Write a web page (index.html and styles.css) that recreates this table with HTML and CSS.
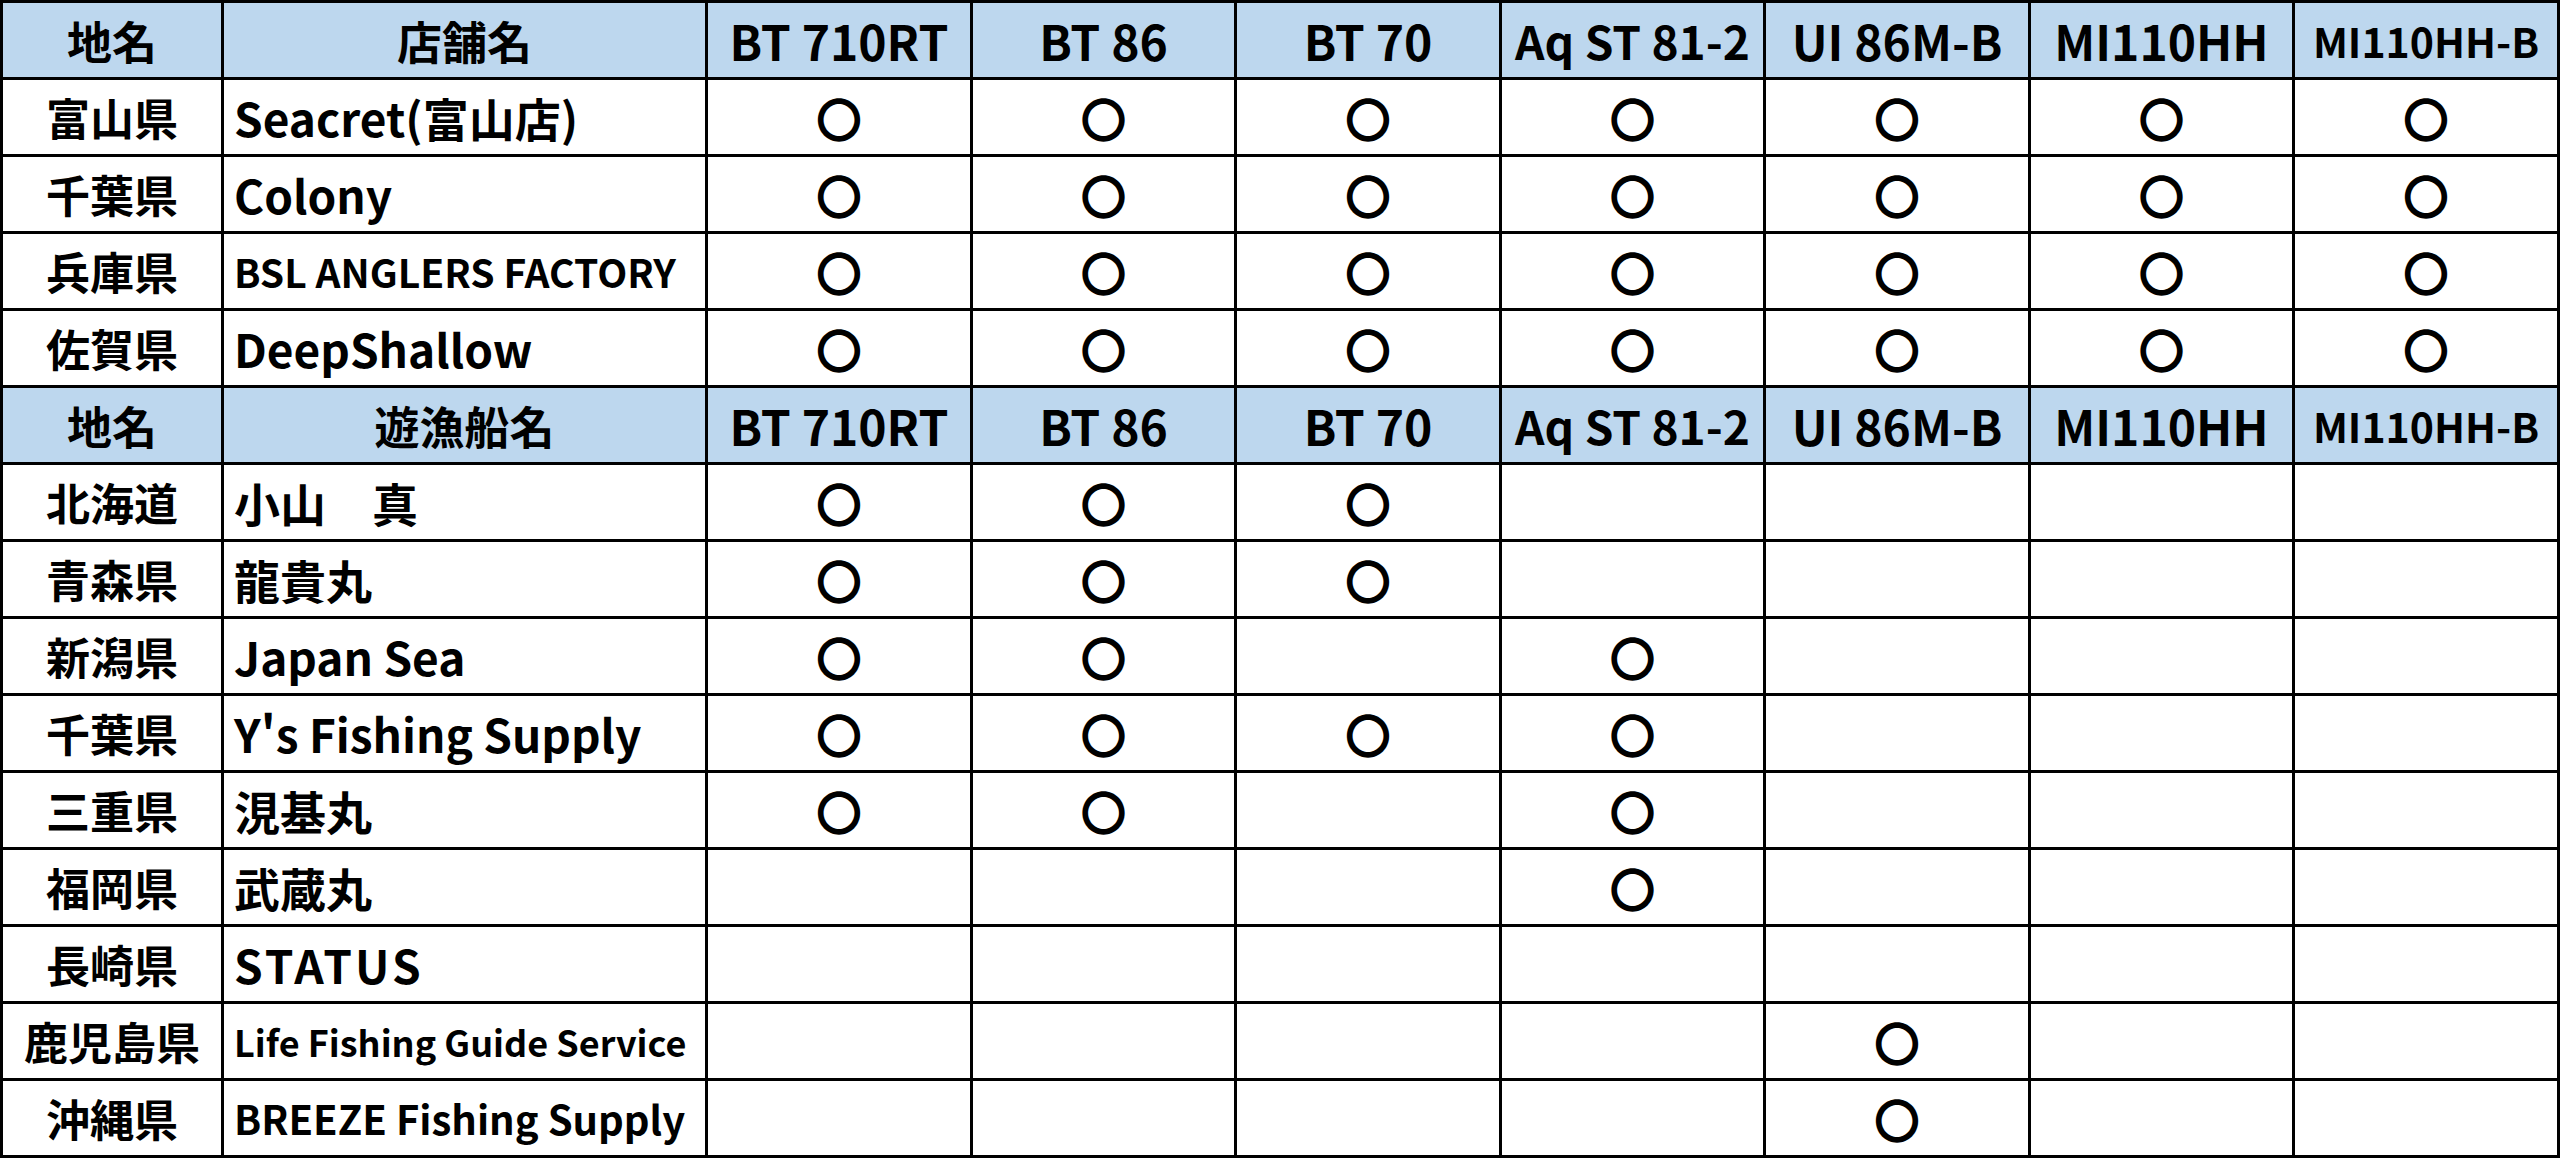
FILE: index.html
```html
<!DOCTYPE html>
<html lang="ja">
<head>
<meta charset="utf-8">
<title>取扱店一覧</title>
<link rel="stylesheet" href="styles.css">
</head>
<body>
<div class="sheet">
  <div class="c hd">地名</div><div class="c hd">店舗名</div>
  <div class="c hd lat">BT 710RT</div><div class="c hd lat">BT 86</div><div class="c hd lat">BT 70</div><div class="c hd lat aq">Aq ST 81-2</div><div class="c hd lat">UI 86M-B</div><div class="c hd lat">MI110HH</div><div class="c hd lat sm">MI110HH-B</div>

  <div class="c pref">富山県</div><div class="c name">Seacret(富山店)</div>
  <div class="c m">〇</div><div class="c m">〇</div><div class="c m">〇</div><div class="c m">〇</div><div class="c m">〇</div><div class="c m">〇</div><div class="c m">〇</div>

  <div class="c pref">千葉県</div><div class="c name">Colony</div>
  <div class="c m">〇</div><div class="c m">〇</div><div class="c m">〇</div><div class="c m">〇</div><div class="c m">〇</div><div class="c m">〇</div><div class="c m">〇</div>

  <div class="c pref">兵庫県</div><div class="c name bsl">BSL ANGLERS FACTORY</div>
  <div class="c m">〇</div><div class="c m">〇</div><div class="c m">〇</div><div class="c m">〇</div><div class="c m">〇</div><div class="c m">〇</div><div class="c m">〇</div>

  <div class="c pref">佐賀県</div><div class="c name">DeepShallow</div>
  <div class="c m">〇</div><div class="c m">〇</div><div class="c m">〇</div><div class="c m">〇</div><div class="c m">〇</div><div class="c m">〇</div><div class="c m">〇</div>

  <div class="c hd">地名</div><div class="c hd">遊漁船名</div>
  <div class="c hd lat">BT 710RT</div><div class="c hd lat">BT 86</div><div class="c hd lat">BT 70</div><div class="c hd lat aq">Aq ST 81-2</div><div class="c hd lat">UI 86M-B</div><div class="c hd lat">MI110HH</div><div class="c hd lat sm">MI110HH-B</div>

  <div class="c pref">北海道</div><div class="c name">小山　真</div>
  <div class="c m">〇</div><div class="c m">〇</div><div class="c m">〇</div><div class="c m"></div><div class="c m"></div><div class="c m"></div><div class="c m"></div>

  <div class="c pref">青森県</div><div class="c name">龍貴丸</div>
  <div class="c m">〇</div><div class="c m">〇</div><div class="c m">〇</div><div class="c m"></div><div class="c m"></div><div class="c m"></div><div class="c m"></div>

  <div class="c pref">新潟県</div><div class="c name">Japan Sea</div>
  <div class="c m">〇</div><div class="c m">〇</div><div class="c m"></div><div class="c m">〇</div><div class="c m"></div><div class="c m"></div><div class="c m"></div>

  <div class="c pref">千葉県</div><div class="c name">Y's Fishing Supply</div>
  <div class="c m">〇</div><div class="c m">〇</div><div class="c m">〇</div><div class="c m">〇</div><div class="c m"></div><div class="c m"></div><div class="c m"></div>

  <div class="c pref">三重県</div><div class="c name">涀基丸</div>
  <div class="c m">〇</div><div class="c m">〇</div><div class="c m"></div><div class="c m">〇</div><div class="c m"></div><div class="c m"></div><div class="c m"></div>

  <div class="c pref">福岡県</div><div class="c name">武蔵丸</div>
  <div class="c m"></div><div class="c m"></div><div class="c m"></div><div class="c m">〇</div><div class="c m"></div><div class="c m"></div><div class="c m"></div>

  <div class="c pref">長崎県</div><div class="c name status">STATUS</div>
  <div class="c m"></div><div class="c m"></div><div class="c m"></div><div class="c m"></div><div class="c m"></div><div class="c m"></div><div class="c m"></div>

  <div class="c pref">鹿児島県</div><div class="c name life">Life Fishing Guide Service</div>
  <div class="c m"></div><div class="c m"></div><div class="c m"></div><div class="c m"></div><div class="c m">〇</div><div class="c m"></div><div class="c m"></div>

  <div class="c pref">沖縄県</div><div class="c name breeze">BREEZE Fishing Supply</div>
  <div class="c m"></div><div class="c m"></div><div class="c m"></div><div class="c m"></div><div class="c m">〇</div><div class="c m"></div><div class="c m"></div>
</div>
</body>
</html>
```

FILE: styles.css
```css
html, body {
  margin: 0;
  padding: 0;
  background: #ffffff;
}

.sheet {
  display: grid;
  grid-template-columns: 221px 484px 265px 264px 265px 264px 265px 264px 265px;
  grid-auto-rows: 77px;
  width: 2560px;
  box-sizing: border-box;
  border-left: 3px solid #000;
  border-top: 3px solid #000;
  font-family: "Noto Sans CJK JP", "Noto Sans", sans-serif;
  color: #000;
}

.c {
  box-sizing: border-box;
  border-right: 3px solid #000;
  border-bottom: 3px solid #000;
  display: flex;
  align-items: center;
  justify-content: center;
  white-space: nowrap;
  overflow: hidden;
}

.hd {
  background: #bdd7ee;
  font-size: 45px;
  font-weight: 700;
}

.hd.lat {
  font-size: 48px;
}

.hd.lat.aq {
  font-size: 46px;
}

.hd.lat.sm {
  font-size: 41px;
}

.pref {
  font-size: 44px;
  font-weight: 700;
}

.name {
  justify-content: flex-start;
  padding-left: 10px;
  font-size: 46px;
  font-weight: 700;
}

.name.status {
  letter-spacing: 3px;
}

.name.bsl {
  font-size: 39px;
}

.name.life {
  font-size: 36px;
}

.name.breeze {
  font-size: 40px;
}

.m {
  font-size: 46px;
  font-weight: 700;
}
```
